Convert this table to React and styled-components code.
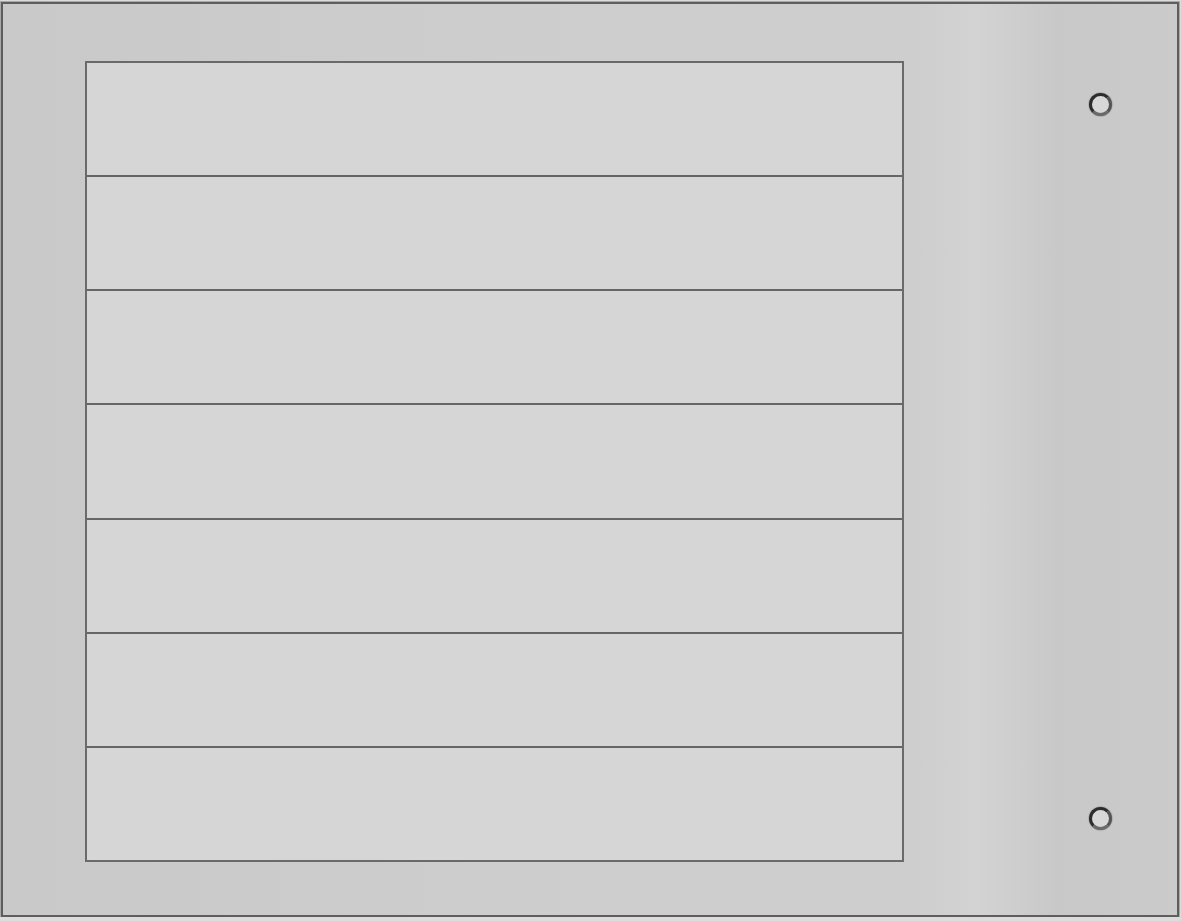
import styled, { createGlobalStyle } from 'styled-components';

const GlobalStyle = createGlobalStyle`
  html, body {
    margin: 0;
    padding: 0;
    background: #dcdcdc;
  }
`;

const ROWS = 7;

const App = () => {
  return (
    <>
      <GlobalStyle />
      <Frame>
        <Panel>
          {Array.from({ length: ROWS }).map((_, i) => (
            <Row key={i} />
          ))}
        </Panel>
        <HoleColumn>
          <Hole />
          <Hole />
        </HoleColumn>
      </Frame>
    </>
  );
};

const Frame = styled.div`
  box-sizing: border-box;
  width: 1178px;
  height: 915px;
  margin: 2px 0 0 1px;
  display: flex;
  flex-direction: row;
  border: 2px solid #5e5e5e;
  background: linear-gradient(
    90deg,
    #c9c9c9 0%,
    #cdcdcd 40%,
    #cecece 78%,
    #d3d3d3 83%,
    #c8c8c8 90%,
    #cbcbcb 100%
  );
  box-shadow: 0 0 0 1px #a8a8a8;
`;

const Panel = styled.div`
  box-sizing: border-box;
  width: 819px;
  height: 801px;
  margin: 57px 0 0 82px;
  display: grid;
  grid-template-rows: repeat(${ROWS}, 1fr);
  gap: 2px;
  border: 2px solid #6a6a6a;
  background: #666666;
  flex-shrink: 0;
`;

const Row = styled.div`
  background: #d6d6d6;
`;

const HoleColumn = styled.div`
  flex: 1;
  display: flex;
  flex-direction: column;
  justify-content: space-between;
  align-items: flex-start;
  padding: 89px 0 85px 185px;
`;

const Hole = styled.div`
  box-sizing: border-box;
  width: 23px;
  height: 23px;
  border-radius: 50%;
  border: 3px solid #2c2c2c;
  border-right-color: #555555;
  border-bottom-color: #6a6a6a;
  background: #d8d8d8;
  box-shadow: 0 0 1px 0.5px rgba(0, 0, 0, 0.25);
`;

export default App;
